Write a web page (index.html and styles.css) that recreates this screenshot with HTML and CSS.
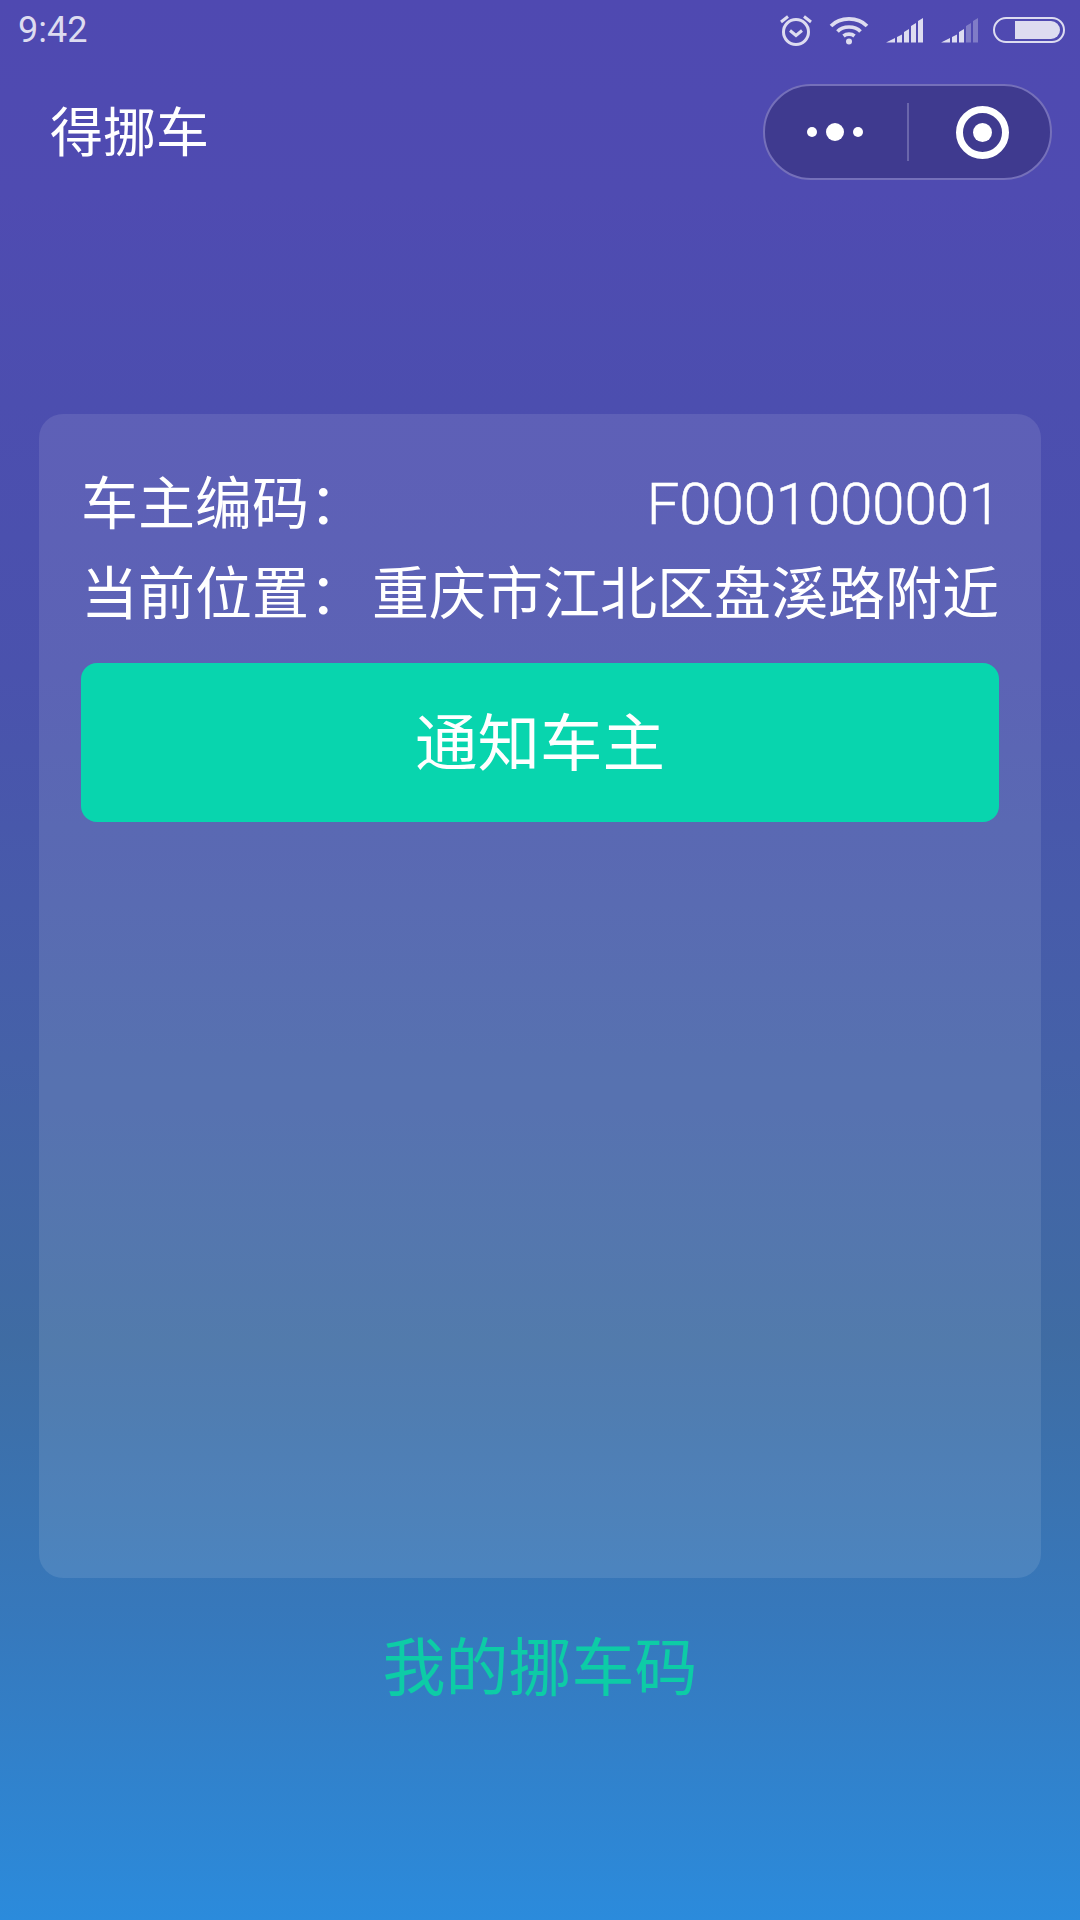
FILE: index.html
```html
<!DOCTYPE html>
<html lang="zh-CN">
<head>
<meta charset="utf-8">
<title>得挪车</title>
<link rel="stylesheet" href="styles.css">
</head>
<body>
<div class="page">
  <div class="status">
    <span class="time">9:42</span>
    <div class="status-icons">
      <svg class="ic-alarm" width="34" height="34" viewBox="0 0 34 34" fill="none" stroke="#dddcf0" stroke-width="3"><circle cx="17" cy="19" r="12.500"/><path d="M11 17.500l6 5 6-5M2 9l7-5.500M32 9l-7-5.500"/></svg>
      <svg class="ic-wifi" width="40" height="30" viewBox="0 0 40 30" fill="none" stroke="#dddcf0" stroke-width="3.600"><path d="M2 11C11 1.500 29 1.500 38 11"/><path d="M8.500 16.500C14 10.500 26 10.500 31.500 16.500"/><path d="M14.500 21C17.500 18.500 22.500 18.500 25.500 21"/><circle cx="20" cy="26.500" r="3" fill="#dddcf0" stroke="none"/></svg>
      <svg class="ic-sig" width="38" height="26" viewBox="0 0 38 26" fill="#dddcf0"><path d="M0 25.500L9 21V25.500ZM11 20L16 17.500V25.500H11ZM18 15L23 12V25.500H18ZM25 9L30 6V25.500H25ZM32 4L37 1V25.500H32Z"/></svg>
      <svg class="ic-sig" width="38" height="26" viewBox="0 0 38 26" fill="#dddcf0"><path d="M0 25.500L9 21V25.500ZM11 20L16 17.500V25.500H11ZM18 15L23 12V25.500H18Z"/><path opacity="0.35" d="M25 9L30 6V25.500H25ZM32 4L37 1V25.500H32Z"/></svg>
      <div class="battery"><div class="battery-fill"></div></div>
    </div>
  </div>
  <div class="nav">
    <span class="nav-title">得挪车</span>
    <div class="capsule">
      <div class="capsule-part part-menu">
        <i class="dot"></i><i class="dot dot-big"></i><i class="dot"></i>
      </div>
      <div class="capsule-line"></div>
      <div class="capsule-part part-close">
        <div class="target"><div class="target-core"></div></div>
      </div>
    </div>
  </div>
  <main class="card">
    <div class="row row-first"><span>车主编码：</span><span class="code">F0001000001</span></div>
    <div class="row"><span>当前位置：</span><span>重庆市江北区盘溪路附近</span></div>
    <div class="notify"><span class="notify-label">通知车主</span></div>
  </main>
  <div class="mycode">我的挪车码</div>
</div>
</body>
</html>
```
FILE: styles.css
```css
* { box-sizing: border-box; }
html, body { margin: 0; padding: 0; }
body {
  width: 1080px;
  height: 1920px;
  overflow: hidden;
  font-family: "Noto Sans CJK SC", "Noto Sans", sans-serif;
  font-weight: 400;
  color: #fff;
}
.page {
  height: 1920px;
  display: flex;
  flex-direction: column;
  background: linear-gradient(180deg, #4f49b1 0%, #4f4bb1 10%, #4c4eaf 21%, #4a52ad 35%, #4561a8 55%, #3f6ca3 70%, #3679bd 85%, #2b8bdc 100%);
}
.status {
  height: 60px;
  padding: 0 15px 0 18px;
  display: flex;
  align-items: center;
  justify-content: space-between;
}
.time {
  font-family: Roboto, sans-serif;
  font-weight: 400;
  font-size: 36px;
  color: #dddcf0;
}
.status-icons { display: flex; align-items: center; gap: 17px; }
.ic-alarm { margin-right: -1px; }
.battery {
  width: 72px;
  height: 26px;
  margin-left: -3px;
  border: 2.500px solid #dddcf0;
  border-radius: 13px;
  padding: 2px 3px 2px 20px;
}
.battery-fill {
  height: 100%;
  background: #dddcf0;
  border-radius: 0 9px 9px 0;
}
.nav {
  height: 132px;
  padding: 12px 28px 0 50px;
  display: flex;
  align-items: center;
  justify-content: space-between;
}
.nav-title { font-size: 53px; line-height: 1; margin-top: -5px; }
.capsule {
  width: 289px;
  height: 96px;
  border-radius: 48px;
  border: 2px solid #7570ba;
  background: #3f3a8f;
  display: flex;
  align-items: center;
}
.capsule-part {
  display: flex;
  align-items: center;
  justify-content: center;
  gap: 9px;
}
.part-menu { flex: 0 0 142px; padding-right: 2px; }
.part-close { flex: 1; padding-left: 5px; }
.capsule-line { width: 2px; height: 58px; background: #6a66ab; }
.dot { width: 10px; height: 10px; border-radius: 50%; background: #fff; }
.dot-big { width: 18px; height: 18px; }
.target {
  width: 53px;
  height: 53px;
  border: 7px solid #fff;
  border-radius: 50%;
  display: flex;
  align-items: center;
  justify-content: center;
}
.target-core { width: 19px; height: 19px; border-radius: 50%; background: #fff; }
.card {
  margin: 222px 39px 0;
  height: 1164px;
  border-radius: 24px;
  background: rgba(255, 255, 255, 0.1);
  padding: 40px 42px 0;
}
.row {
  display: flex;
  justify-content: space-between;
  font-size: 57px;
  line-height: 90px;
  white-space: nowrap;
}
.code {
  font-family: Roboto, sans-serif;
  font-weight: 300;
  font-size: 58px;
  -webkit-text-stroke: 0.5px #fff;
  height: 90px;
  line-height: 100px;
  margin-right: -2px;
}
.notify {
  margin-top: 29px;
  height: 159px;
  padding-bottom: 9px;
  border-radius: 16px;
  background: #08d5ae;
  display: flex;
  align-items: center;
  justify-content: center;
  font-size: 62.500px;
}
.mycode {
  margin-top: 45px;
  text-align: center;
  font-size: 63px;
  line-height: 80px;
  color: #0dcca6;
}
```
